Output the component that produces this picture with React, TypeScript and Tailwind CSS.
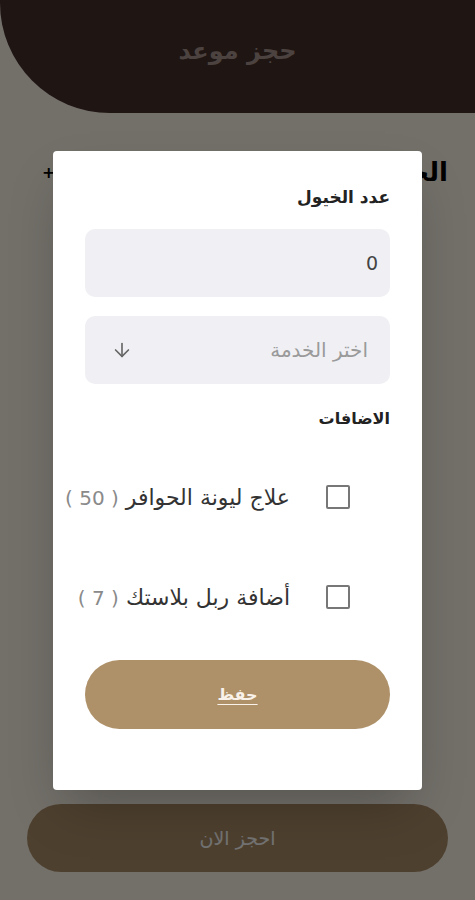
import { useState } from 'react'
import { ArrowDown } from 'lucide-react'

type Addon = {
  id: string
  label: string
  price: number
}

const ADDONS: Addon[] = [
  { id: 'hoof', label: 'علاج ليونة الحوافر', price: 50 },
  { id: 'rubber', label: 'أضافة ربل بلاستك', price: 7 },
]

export default function App() {
  const [count, setCount] = useState('0')
  const [checked, setChecked] = useState<Record<string, boolean>>({})

  return (
    <div dir="rtl" className="relative flex h-[900px] w-full flex-col overflow-hidden bg-[#fff8ec] font-['DejaVu_Sans',sans-serif]">
      {/* page behind the dialog */}
      <header className="flex h-[113px] items-center justify-center rounded-bl-[110px] bg-[#46302c] pb-3">
        <h1 className="text-[24px] font-bold text-[#a8958f]">حجز موعد</h1>
      </header>

      <div className="mt-[40px] flex items-center justify-between pl-[42px] pr-[27px]">
        <h2 className="text-[26px] font-bold text-black">الخيول</h2>
        <span className="text-[16px] font-bold leading-none text-black">+</span>
      </div>

      <div className="mt-auto mb-[28px] px-[27px]">
        <button className="flex h-[68px] w-full items-center justify-center rounded-full bg-[#ae8f69] text-[19px] text-white">
          احجز الان
        </button>
      </div>

      {/* dialog */}
      <div className="absolute inset-0 bg-black/55">
        <div className="mx-auto mt-[151px] flex w-[369px] flex-col rounded-[4px] bg-white px-8 pt-[33px] pb-[61px] shadow-2xl">
          <h3 className="text-[17px] leading-[26px] font-bold text-[#222]">عدد الخيول</h3>

          <input
            value={count}
            onChange={(e) => setCount(e.target.value)}
            className="mt-[19px] h-[68px] w-full rounded-[10px] bg-[#f0f0f4] pr-[12px] pl-4 text-[19px] text-[#444] outline-none"
          />

          <button className="mt-[19px] flex h-[68px] w-full items-center justify-between rounded-[10px] bg-[#f0f0f4] pr-[22px] pl-[26px]">
            <span className="text-[20px] text-[#9a9a9a]">اختر الخدمة</span>
            <ArrowDown size={22} strokeWidth={1.8} className="text-[#666]" />
          </button>

          <h3 className="mt-[23px] text-[16px] leading-[24px] font-bold text-[#222]">الاضافات</h3>

          <div className="mt-[41px] flex flex-col gap-[50px]">
            {ADDONS.map((addon) => (
              <label key={addon.id} className="flex h-[50px] cursor-pointer items-center pr-[40px]">
                <input
                  type="checkbox"
                  checked={Boolean(checked[addon.id])}
                  onChange={(e) => setChecked({ ...checked, [addon.id]: e.target.checked })}
                  className="h-[24px] w-[24px] shrink-0 appearance-none rounded-[2px] border-2 border-[#777] checked:bg-[#ae8f69]"
                />
                <span className="mr-[36px] text-[22px] whitespace-nowrap text-[#333]">
                  {addon.label} <span className="text-[20px] tracking-[1px] text-[#8a8a8a]">( {addon.price} )</span>
                </span>
              </label>
            ))}
          </div>

          <button className="mt-[38px] flex h-[69px] w-full items-center justify-center rounded-full bg-[#ae9169] text-[16px] font-bold text-[#f8f2ea] underline underline-offset-4">
            حفظ
          </button>
        </div>
      </div>
    </div>
  )
}
